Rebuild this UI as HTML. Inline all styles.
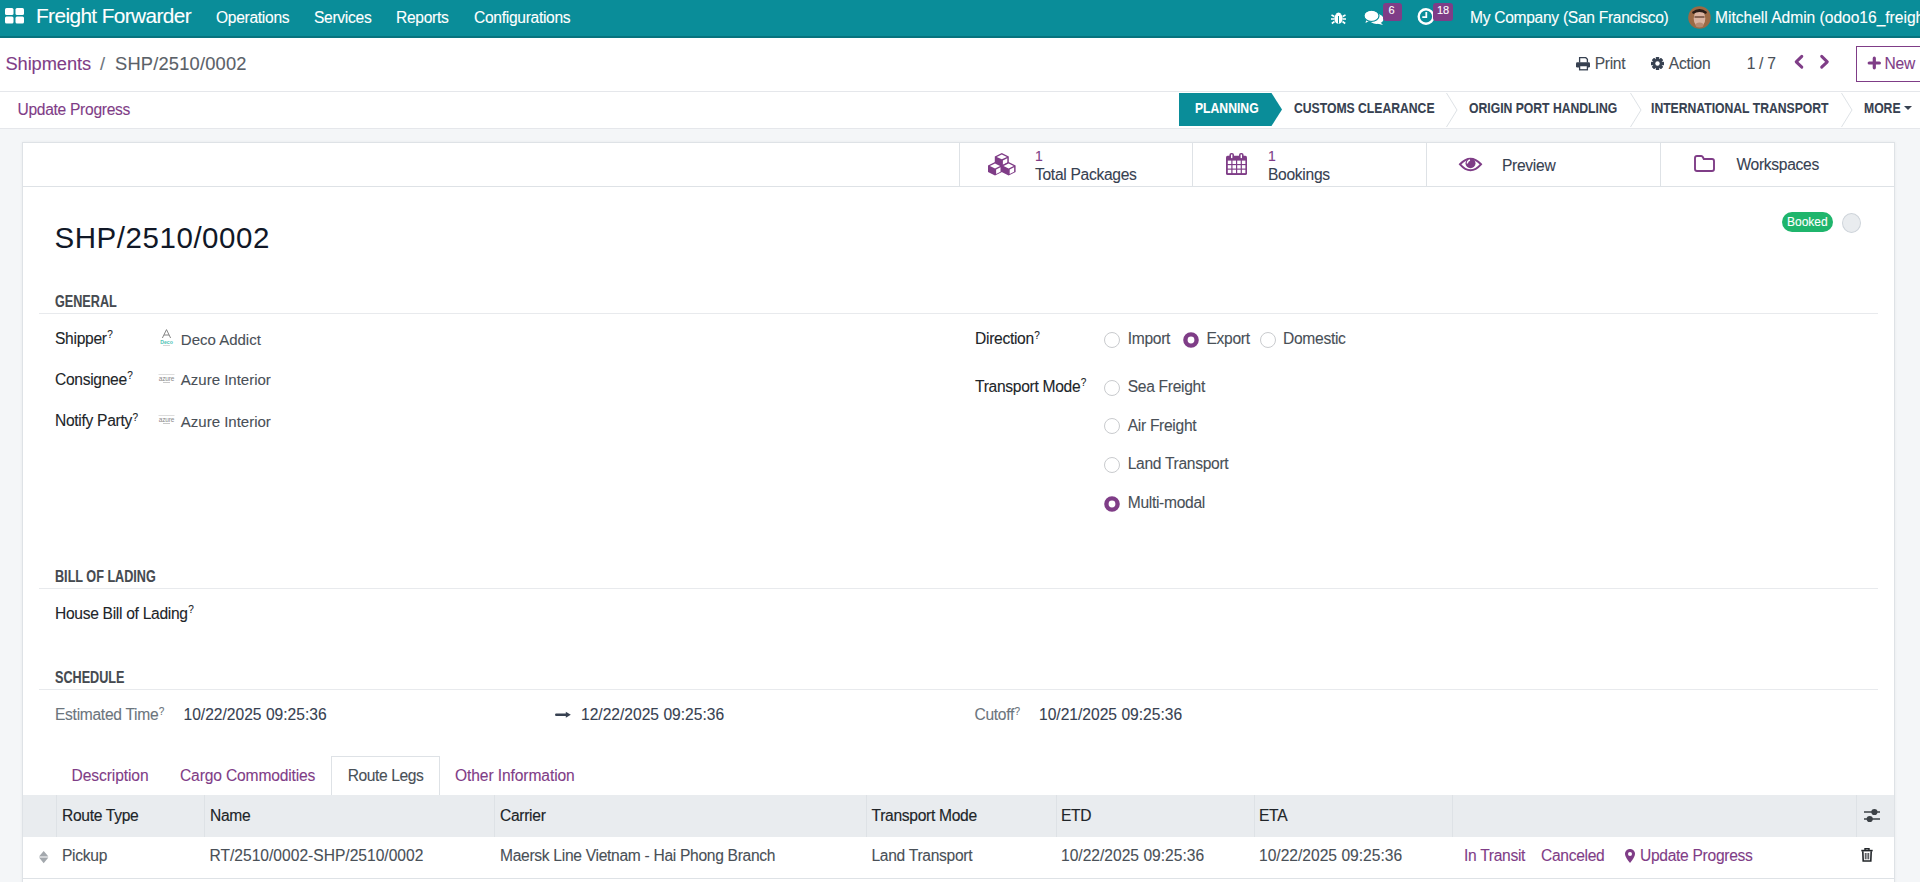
<!DOCTYPE html>
<html><head><meta charset="utf-8"><style>
html,body{margin:0;padding:0;width:1920px;height:882px;overflow:hidden;position:relative;font-family:"Liberation Sans", sans-serif;}
.t{position:absolute;white-space:nowrap;line-height:1;-webkit-text-stroke:0.1px currentColor;}
</style></head><body>
<div style="position:absolute;left:0px;top:0px;width:1920px;height:882px;background:#f4f6f8"></div>
<div style="position:absolute;left:0px;top:0px;width:1920px;height:36px;background:#0a8d99"></div>
<div style="position:absolute;left:0px;top:36px;width:1920px;height:1.6px;background:#07737e"></div>
<svg style="position:absolute;left:5px;top:8px;overflow:visible" width="19" height="16" viewBox="0 0 19 16"><g fill="#fff"><rect x="0" y="0" width="8.5" height="7" rx="1.5"/><rect x="10.5" y="0" width="8.5" height="7" rx="1.5"/><rect x="0" y="8.5" width="8.5" height="7" rx="1.5"/><rect x="10.5" y="8.5" width="8.5" height="7" rx="1.5"/></g></svg>
<div class="t" style="left:36px;top:5.89px;font-size:20.8px;color:#fff;font-weight:400;letter-spacing:-0.6px;">Freight Forwarder</div>
<div class="t" style="left:216px;top:10.09px;font-size:15.6px;color:#fff;font-weight:400;letter-spacing:-0.3px;">Operations</div>
<div class="t" style="left:314px;top:10.09px;font-size:15.6px;color:#fff;font-weight:400;letter-spacing:-0.3px;">Services</div>
<div class="t" style="left:396px;top:10.09px;font-size:15.6px;color:#fff;font-weight:400;letter-spacing:-0.3px;">Reports</div>
<div class="t" style="left:474px;top:10.09px;font-size:15.6px;color:#fff;font-weight:400;letter-spacing:-0.3px;">Configurations</div>
<svg style="position:absolute;left:1331px;top:11px;overflow:visible" width="15" height="13" viewBox="0 0 15 13"><g fill="#fff"><ellipse cx="7.5" cy="7.5" rx="4.2" ry="5.2"/><path d="M4.5 3.2 Q7.5 0 10.5 3.2Z"/><path d="M3.3 5.5 L0.5 4 M3.2 8 L0 8 M3.5 10.5 L0.8 12.5 M11.7 5.5 L14.5 4 M11.8 8 L15 8 M11.5 10.5 L14.2 12.5" stroke="#fff" stroke-width="1.6"/></g><path d="M7.5 5 V12.5" stroke="#0a8d99" stroke-width="1"/></svg>
<svg style="position:absolute;left:1364px;top:10px;overflow:visible" width="20" height="15" viewBox="0 0 20 15"><g fill="#fff"><ellipse cx="7.5" cy="5.8" rx="7.5" ry="5.6"/><path d="M2.5 9 L1.5 13 L6 10.5Z"/><ellipse cx="12.5" cy="9" rx="7" ry="5" /><path d="M16 12 L19 15 L13 13.5Z"/></g><ellipse cx="7.5" cy="5.8" rx="7.5" ry="5.6" fill="none" stroke="#0a8d99" stroke-width="1.2"/><ellipse cx="7.5" cy="5.8" rx="6.3" ry="4.6" fill="#fff"/></svg>
<div style="position:absolute;left:1382.5px;top:2.5px;width:19px;height:18px;background:#7f3d87;border-radius:3px"></div>
<div class="t" style="left:1388.5px;top:4.89px;font-size:11px;color:#fff;font-weight:400;">6</div>
<svg style="position:absolute;left:1417px;top:7px;overflow:visible" width="18" height="18" viewBox="0 0 18 18"><circle cx="9" cy="9.5" r="7.3" fill="none" stroke="#fff" stroke-width="2.4"/><path d="M9.3 5 V10.2 H5.3" fill="none" stroke="#fff" stroke-width="1.8"/></svg>
<div style="position:absolute;left:1432.5px;top:2.5px;width:20.5px;height:18px;background:#7f3d87;border-radius:3px"></div>
<div class="t" style="left:1437px;top:4.89px;font-size:11px;color:#fff;font-weight:400;">18</div>
<div class="t" style="left:1470px;top:10.09px;font-size:15.6px;color:#fff;font-weight:400;letter-spacing:-0.3px;">My Company (San Francisco)</div>
<svg style="position:absolute;left:1688px;top:6px;overflow:visible" width="23" height="23" viewBox="0 0 23 23"><defs><clipPath id="av"><circle cx="11.5" cy="11.5" r="11.3"/></clipPath></defs><g clip-path="url(#av)"><rect width="23" height="23" fill="#9b6a45"/><ellipse cx="11.5" cy="12.5" rx="5.8" ry="8" fill="#d9b3a0"/><path d="M4 6 Q11.5 0 19 6 L18 8 Q11.5 4 5 8Z" fill="#2a1c16"/><path d="M6.5 11 H16.5" stroke="#6b4a3a" stroke-width="1.3"/><ellipse cx="11.5" cy="19" rx="4" ry="2.5" fill="#b88a70"/></g></svg>
<div class="t" style="left:1715px;top:10.09px;font-size:15.6px;color:#fff;font-weight:400;letter-spacing:-0.02px;">Mitchell Admin (odoo16_freight_forwarder)</div>
<div style="position:absolute;left:0px;top:37.6px;width:1920px;height:54px;background:#fff"></div>
<div style="position:absolute;left:0px;top:91px;width:1920px;height:1px;background:#e5e7eb"></div>
<div class="t" style="left:5.5px;top:54.51px;font-size:18.3px;color:#7f3d87;font-weight:400;letter-spacing:-0.1px;">Shipments</div>
<div class="t" style="left:100px;top:54.51px;font-size:18.3px;color:#6c757d;font-weight:400;">/</div>
<div class="t" style="left:115px;top:54.51px;font-size:18.3px;color:#5a6168;font-weight:400;letter-spacing:0.2px;">SHP/2510/0002</div>
<svg style="position:absolute;left:1576px;top:57px;overflow:visible" width="14" height="13.5" viewBox="0 0 14 13.5"><path d="M3.6 5.5 V0.7 H9.8 L11.4 2.3 V5.5" fill="none" stroke="#374151" stroke-width="1.3"/><rect x="0" y="5.3" width="14" height="5.2" rx="1.3" fill="#374151"/><rect x="3.6" y="8.6" width="7.8" height="4.2" fill="#fff" stroke="#374151" stroke-width="1.3"/></svg>
<div class="t" style="left:1594.7px;top:56.49px;font-size:15.6px;color:#495057;font-weight:400;letter-spacing:-0.3px;">Print</div>
<svg style="position:absolute;left:1651px;top:57px;overflow:visible" width="13" height="13" viewBox="0 0 13 13"><g transform="translate(6.5,6.5)" fill="#374151"><rect x="-1.7" y="-6.5" width="3.4" height="3.2" rx="0.5" transform="rotate(0)"/><rect x="-1.7" y="-6.5" width="3.4" height="3.2" rx="0.5" transform="rotate(45)"/><rect x="-1.7" y="-6.5" width="3.4" height="3.2" rx="0.5" transform="rotate(90)"/><rect x="-1.7" y="-6.5" width="3.4" height="3.2" rx="0.5" transform="rotate(135)"/><rect x="-1.7" y="-6.5" width="3.4" height="3.2" rx="0.5" transform="rotate(180)"/><rect x="-1.7" y="-6.5" width="3.4" height="3.2" rx="0.5" transform="rotate(225)"/><rect x="-1.7" y="-6.5" width="3.4" height="3.2" rx="0.5" transform="rotate(270)"/><rect x="-1.7" y="-6.5" width="3.4" height="3.2" rx="0.5" transform="rotate(315)"/><circle r="4.5"/></g><circle cx="6.5" cy="6.5" r="2.2" fill="#fff"/></svg>
<div class="t" style="left:1668.8px;top:56.49px;font-size:15.6px;color:#495057;font-weight:400;letter-spacing:-0.3px;">Action</div>
<div class="t" style="left:1746.7px;top:56.49px;font-size:15.6px;color:#495057;font-weight:400;letter-spacing:-0.3px;">1 / 7</div>
<svg style="position:absolute;left:1794px;top:55.2px;overflow:visible" width="9.5" height="13.6" viewBox="0 0 9.5 13.6"><path d="M7.8 1.4 L2.2 6.8 L7.8 12.2" fill="none" stroke="#7f3d87" stroke-width="3" stroke-linecap="round" stroke-linejoin="round"/></svg>
<svg style="position:absolute;left:1820.3px;top:55.2px;overflow:visible" width="9.5" height="13.6" viewBox="0 0 9.5 13.6"><path d="M1.7 1.4 L7.3 6.8 L1.7 12.2" fill="none" stroke="#7f3d87" stroke-width="3" stroke-linecap="round" stroke-linejoin="round"/></svg>
<div style="position:absolute;left:1856px;top:46px;width:80px;height:36px;border:1px solid #7f3d87;box-sizing:border-box;background:#fff"></div>
<svg style="position:absolute;left:1868px;top:57.1px;overflow:visible" width="12.6" height="12" viewBox="0 0 12.6 12"><path d="M6.3 1.2 V10.8 M1.2 6 H11.4" stroke="#7f3d87" stroke-width="3.2" stroke-linecap="round"/></svg>
<div class="t" style="left:1884.6px;top:56.49px;font-size:15.6px;color:#7f3d87;font-weight:400;letter-spacing:-0.3px;">New</div>
<div style="position:absolute;left:0px;top:92px;width:1920px;height:37px;background:#fff"></div>
<div style="position:absolute;left:0px;top:128px;width:1920px;height:1px;background:#e5e7eb"></div>
<div class="t" style="left:17.5px;top:101.79px;font-size:15.6px;color:#7f3d87;font-weight:400;letter-spacing:-0.3px;">Update Progress</div>
<svg style="position:absolute;left:1179px;top:93px;overflow:visible" width="104" height="33" viewBox="0 0 104 33"><path d="M0 0 H92.5 L103 16.5 L92.5 33 H0Z" fill="#0a8d99"/></svg>
<div class="t" style="left:1195px;top:101.45px;font-size:14px;color:#fff;font-weight:700;"><span style="display:inline-block;transform:scaleX(0.87);transform-origin:0 0">PLANNING</span></div>
<div class="t" style="left:1294px;top:101.45px;font-size:14px;color:#374151;font-weight:700;"><span style="display:inline-block;transform:scaleX(0.87);transform-origin:0 0">CUSTOMS CLEARANCE</span></div>
<div class="t" style="left:1468.5px;top:101.45px;font-size:14px;color:#374151;font-weight:700;"><span style="display:inline-block;transform:scaleX(0.87);transform-origin:0 0">ORIGIN PORT HANDLING</span></div>
<div class="t" style="left:1651px;top:101.45px;font-size:14px;color:#374151;font-weight:700;"><span style="display:inline-block;transform:scaleX(0.87);transform-origin:0 0">INTERNATIONAL TRANSPORT</span></div>
<div class="t" style="left:1864px;top:101.45px;font-size:14px;color:#374151;font-weight:700;"><span style="display:inline-block;transform:scaleX(0.87);transform-origin:0 0">MORE</span></div>
<svg style="position:absolute;left:1904px;top:106px;overflow:visible" width="8" height="4" viewBox="0 0 8 4"><path d="M0 0 H8 L4 4Z" fill="#374151"/></svg>
<svg style="position:absolute;left:1445.5px;top:93px;overflow:visible" width="12" height="34" viewBox="0 0 12 34"><path d="M0.5 0 L11 17 L0.5 34" fill="none" stroke="#dee2e6" stroke-width="1"/></svg>
<svg style="position:absolute;left:1629.5px;top:93px;overflow:visible" width="12" height="34" viewBox="0 0 12 34"><path d="M0.5 0 L11 17 L0.5 34" fill="none" stroke="#dee2e6" stroke-width="1"/></svg>
<svg style="position:absolute;left:1841px;top:93px;overflow:visible" width="12" height="34" viewBox="0 0 12 34"><path d="M0.5 0 L11 17 L0.5 34" fill="none" stroke="#dee2e6" stroke-width="1"/></svg>
<div style="position:absolute;left:21.5px;top:142px;width:1873.5px;height:760px;background:#fff;border:1px solid #dee2e6;box-sizing:border-box;box-shadow:0 0 3px rgba(0,0,0,.06)"></div>
<div style="position:absolute;left:22px;top:186px;width:1873px;height:1px;background:#dee2e6"></div>
<div style="position:absolute;left:959px;top:142px;width:1px;height:45px;background:#dee2e6"></div>
<div style="position:absolute;left:1192px;top:142px;width:1px;height:45px;background:#dee2e6"></div>
<div style="position:absolute;left:1426px;top:142px;width:1px;height:45px;background:#dee2e6"></div>
<div style="position:absolute;left:1660px;top:142px;width:1px;height:45px;background:#dee2e6"></div>
<svg style="position:absolute;left:987.6px;top:152.7px;overflow:visible" width="28" height="23" viewBox="0 0 28 23"><path d="M13.8 0 L20.8 3.4 V10 L13.8 13.4 L6.8 10 V3.4Z" fill="#7f3d87"/><path d="M13.8 1.5 L18.9 3.9 L13.8 6.3 L8.7 3.9Z" fill="#fff"/><path d="M14.899999999999999 7.4 L19.3 5.2 V9.6 L14.899999999999999 11.8Z" fill="#fff"/><path d="M7 9.1 L14 12.5 V19.1 L7 22.5 L0 19.1 V12.5Z" fill="#7f3d87"/><path d="M7 10.6 L12.1 13.0 L7 15.399999999999999 L1.9 13.0Z" fill="#fff"/><path d="M8.1 16.5 L12.5 14.3 V18.7 L8.1 20.9Z" fill="#fff"/><path d="M20.6 9.1 L27.6 12.5 V19.1 L20.6 22.5 L13.6 19.1 V12.5Z" fill="#7f3d87"/><path d="M20.6 10.6 L25.7 13.0 L20.6 15.399999999999999 L15.5 13.0Z" fill="#fff"/><path d="M21.7 16.5 L26.1 14.3 V18.7 L21.7 20.9Z" fill="#fff"/></svg>
<div class="t" style="left:1035px;top:149.15px;font-size:14px;color:#7f3d87;font-weight:400;">1</div>
<div class="t" style="left:1035px;top:167.29px;font-size:15.6px;color:#374151;font-weight:400;letter-spacing:-0.3px;">Total Packages</div>
<svg style="position:absolute;left:1226px;top:153px;overflow:visible" width="21" height="22" viewBox="0 0 21 22"><rect x="0" y="2.8" width="21" height="19.2" rx="1.6" fill="#7f3d87"/><rect x="1.8" y="7.60" width="3.5" height="3.4" fill="#fff"/><rect x="1.8" y="12.15" width="3.5" height="3.4" fill="#fff"/><rect x="1.8" y="16.70" width="3.5" height="3.4" fill="#fff"/><rect x="6.5" y="7.60" width="3.5" height="3.4" fill="#fff"/><rect x="6.5" y="12.15" width="3.5" height="3.4" fill="#fff"/><rect x="6.5" y="16.70" width="3.5" height="3.4" fill="#fff"/><rect x="11.2" y="7.60" width="3.5" height="3.4" fill="#fff"/><rect x="11.2" y="12.15" width="3.5" height="3.4" fill="#fff"/><rect x="11.2" y="16.70" width="3.5" height="3.4" fill="#fff"/><rect x="15.9" y="7.60" width="3.5" height="3.4" fill="#fff"/><rect x="15.9" y="12.15" width="3.5" height="3.4" fill="#fff"/><rect x="15.9" y="16.70" width="3.5" height="3.4" fill="#fff"/><rect x="3.4" y="0" width="4.6" height="6" rx="2" fill="#7f3d87"/><rect x="13" y="0" width="4.6" height="6" rx="2" fill="#7f3d87"/><rect x="5" y="1.5" width="1.4" height="3.6" fill="#fff"/><rect x="14.6" y="1.5" width="1.4" height="3.6" fill="#fff"/></svg>
<div class="t" style="left:1268px;top:149.15px;font-size:14px;color:#7f3d87;font-weight:400;">1</div>
<div class="t" style="left:1268px;top:167.29px;font-size:15.6px;color:#374151;font-weight:400;letter-spacing:-0.3px;">Bookings</div>
<svg style="position:absolute;left:1459px;top:157.3px;overflow:visible" width="23" height="15" viewBox="0 0 23 15"><path d="M1 7.3 Q11.5 -4 22 7.3 Q11.5 19 1 7.3Z" fill="none" stroke="#7f3d87" stroke-width="2"/><circle cx="11.5" cy="6.2" r="5" fill="#7f3d87"/><path d="M8.3 6.5 Q8.5 3.6 11 3" fill="none" stroke="#fff" stroke-width="1.3"/></svg>
<div class="t" style="left:1502px;top:157.59px;font-size:15.6px;color:#374151;font-weight:400;letter-spacing:-0.3px;">Preview</div>
<svg style="position:absolute;left:1694px;top:154.7px;overflow:visible" width="21" height="17" viewBox="0 0 21 17"><path d="M1 3 Q1 1 3 1 H7.3 Q8.3 1 8.8 2 L9.8 4 H18 Q20 4 20 6 V14 Q20 16 18 16 H3 Q1 16 1 14Z" fill="none" stroke="#7f3d87" stroke-width="1.9"/></svg>
<div class="t" style="left:1736.4px;top:157.19px;font-size:15.6px;color:#374151;font-weight:400;letter-spacing:-0.3px;">Workspaces</div>
<div style="position:absolute;left:1782px;top:212px;width:50.5px;height:20px;background:#1fb56c;border-radius:10px"></div>
<div class="t" style="left:1787px;top:216.14px;font-size:12px;color:#fff;font-weight:400;">Booked</div>
<div style="position:absolute;left:1842px;top:213px;width:19px;height:20px;background:#e9ecef;border:1px solid #ced4da;border-radius:50%;box-sizing:border-box"></div>
<div class="t" style="left:54.5px;top:223.03px;font-size:29.5px;color:#111827;font-weight:400;letter-spacing:0.55px;-webkit-text-stroke:0">SHP/2510/0002</div>
<div class="t" style="left:55.3px;top:294.39px;font-size:15.6px;color:#454a50;font-weight:700;"><span style="display:inline-block;transform:scaleX(0.81);transform-origin:0 0">GENERAL</span></div>
<div style="position:absolute;left:39px;top:312.5px;width:1839px;height:1px;background:#e8eaed"></div>
<div class="t" style="left:55.3px;top:569.19px;font-size:15.6px;color:#454a50;font-weight:700;"><span style="display:inline-block;transform:scaleX(0.81);transform-origin:0 0">BILL OF LADING</span></div>
<div style="position:absolute;left:39px;top:587.5px;width:1839px;height:1px;background:#e8eaed"></div>
<div class="t" style="left:55.3px;top:670.19px;font-size:15.6px;color:#454a50;font-weight:700;"><span style="display:inline-block;transform:scaleX(0.81);transform-origin:0 0">SCHEDULE</span></div>
<div style="position:absolute;left:39px;top:688.5px;width:1839px;height:1px;background:#e8eaed"></div>
<div class="t" style="left:55px;top:330.99px;font-size:15.6px;color:#212529;font-weight:400;letter-spacing:-0.3px;">Shipper<span style="font-size:10px;position:relative;top:-5.6px;letter-spacing:0;margin-left:0.5px">?</span></div>
<div class="t" style="left:180.8px;top:331.50px;font-size:15px;color:#495057;font-weight:400;">Deco Addict</div>
<div class="t" style="left:55px;top:371.59px;font-size:15.6px;color:#212529;font-weight:400;letter-spacing:-0.3px;">Consignee<span style="font-size:10px;position:relative;top:-5.6px;letter-spacing:0;margin-left:0.5px">?</span></div>
<div class="t" style="left:180.8px;top:372.10px;font-size:15px;color:#495057;font-weight:400;">Azure Interior</div>
<div class="t" style="left:55px;top:413.39px;font-size:15.6px;color:#212529;font-weight:400;letter-spacing:-0.3px;">Notify Party<span style="font-size:10px;position:relative;top:-5.6px;letter-spacing:0;margin-left:0.5px">?</span></div>
<div class="t" style="left:180.8px;top:413.90px;font-size:15px;color:#495057;font-weight:400;">Azure Interior</div>
<svg style="position:absolute;left:158px;top:328.5px;overflow:visible" width="17" height="18" viewBox="0 0 17 18"><path d="M4.4 9 L8.5 0.6 L12.6 9 M6 6 H11" stroke="#777" stroke-width="0.9" fill="none"/><text x="8.5" y="14.6" font-size="5.2" font-family="Liberation Sans" fill="#4fc3b5" text-anchor="middle" font-weight="700">Deco</text><rect x="5" y="16" width="7" height="0.8" fill="#ccc"/></svg>
<svg style="position:absolute;left:158px;top:373.5px;overflow:visible" width="17" height="10" viewBox="0 0 17 10"><rect x="0.5" y="0" width="16" height="0.8" fill="#d5d5d5"/><text x="8.5" y="6.8" font-size="6.5" font-family="Liberation Sans" fill="#888" text-anchor="middle" letter-spacing="-0.2">azure</text><rect x="5" y="8" width="7" height="0.8" fill="#bbb"/></svg>
<svg style="position:absolute;left:158px;top:415px;overflow:visible" width="17" height="10" viewBox="0 0 17 10"><rect x="0.5" y="0" width="16" height="0.8" fill="#d5d5d5"/><text x="8.5" y="6.8" font-size="6.5" font-family="Liberation Sans" fill="#888" text-anchor="middle" letter-spacing="-0.2">azure</text><rect x="5" y="8" width="7" height="0.8" fill="#bbb"/></svg>
<div class="t" style="left:975px;top:331.39px;font-size:15.6px;color:#212529;font-weight:400;letter-spacing:-0.3px;">Direction<span style="font-size:10px;position:relative;top:-5.6px;letter-spacing:0;margin-left:0.5px">?</span></div>
<svg style="position:absolute;left:1104px;top:331.5px;overflow:visible" width="16" height="16" viewBox="0 0 16 16"><circle cx="8" cy="8" r="7.5" fill="#fff" stroke="#c9cbce" stroke-width="1"/></svg>
<div class="t" style="left:1127.7px;top:331.39px;font-size:15.6px;color:#495057;font-weight:400;letter-spacing:-0.3px;">Import</div>
<svg style="position:absolute;left:1182.5px;top:331.5px;overflow:visible" width="16" height="16" viewBox="0 0 16 16"><circle cx="8" cy="8" r="5.6" fill="#fff" stroke="#7f3d87" stroke-width="4.4"/></svg>
<div class="t" style="left:1206.5px;top:331.39px;font-size:15.6px;color:#495057;font-weight:400;letter-spacing:-0.3px;">Export</div>
<svg style="position:absolute;left:1260px;top:331.5px;overflow:visible" width="16" height="16" viewBox="0 0 16 16"><circle cx="8" cy="8" r="7.5" fill="#fff" stroke="#c9cbce" stroke-width="1"/></svg>
<div class="t" style="left:1283px;top:331.39px;font-size:15.6px;color:#495057;font-weight:400;letter-spacing:-0.3px;">Domestic</div>
<div class="t" style="left:975px;top:378.69px;font-size:15.6px;color:#212529;font-weight:400;letter-spacing:-0.3px;">Transport Mode<span style="font-size:10px;position:relative;top:-5.6px;letter-spacing:0;margin-left:0.5px">?</span></div>
<svg style="position:absolute;left:1104px;top:379.5px;overflow:visible" width="16" height="16" viewBox="0 0 16 16"><circle cx="8" cy="8" r="7.5" fill="#fff" stroke="#c9cbce" stroke-width="1"/></svg>
<div class="t" style="left:1127.7px;top:379.39px;font-size:15.6px;color:#495057;font-weight:400;letter-spacing:-0.3px;">Sea Freight</div>
<svg style="position:absolute;left:1104px;top:418px;overflow:visible" width="16" height="16" viewBox="0 0 16 16"><circle cx="8" cy="8" r="7.5" fill="#fff" stroke="#c9cbce" stroke-width="1"/></svg>
<div class="t" style="left:1127.7px;top:417.89px;font-size:15.6px;color:#495057;font-weight:400;letter-spacing:-0.3px;">Air Freight</div>
<svg style="position:absolute;left:1104px;top:456.5px;overflow:visible" width="16" height="16" viewBox="0 0 16 16"><circle cx="8" cy="8" r="7.5" fill="#fff" stroke="#c9cbce" stroke-width="1"/></svg>
<div class="t" style="left:1127.7px;top:456.39px;font-size:15.6px;color:#495057;font-weight:400;letter-spacing:-0.3px;">Land Transport</div>
<svg style="position:absolute;left:1104px;top:495.5px;overflow:visible" width="16" height="16" viewBox="0 0 16 16"><circle cx="8" cy="8" r="5.6" fill="#fff" stroke="#7f3d87" stroke-width="4.4"/></svg>
<div class="t" style="left:1127.7px;top:495.39px;font-size:15.6px;color:#495057;font-weight:400;letter-spacing:-0.3px;">Multi-modal</div>
<div class="t" style="left:55px;top:606.09px;font-size:15.6px;color:#212529;font-weight:400;letter-spacing:-0.3px;">House Bill of Lading<span style="font-size:10px;position:relative;top:-5.6px;letter-spacing:0;margin-left:0.5px">?</span></div>
<div class="t" style="left:55px;top:707.29px;font-size:15.6px;color:#6c757d;font-weight:400;letter-spacing:-0.3px;">Estimated Time<span style="font-size:10px;position:relative;top:-5.6px;letter-spacing:0;margin-left:0.5px">?</span></div>
<div class="t" style="left:183.5px;top:707.29px;font-size:15.6px;color:#374151;font-weight:400;">10/22/2025 09:25:36</div>
<svg style="position:absolute;left:554.5px;top:710.8px;overflow:visible" width="16" height="8" viewBox="0 0 16 8"><path d="M1.2 3.8 H12" stroke="#374151" stroke-width="2.4" stroke-linecap="round"/><path d="M10.8 0.8 L15.8 3.8 L10.8 6.8Z" fill="#374151"/></svg>
<div class="t" style="left:581px;top:707.29px;font-size:15.6px;color:#374151;font-weight:400;">12/22/2025 09:25:36</div>
<div class="t" style="left:974.5px;top:707.29px;font-size:15.6px;color:#6c757d;font-weight:400;letter-spacing:-0.3px;">Cutoff<span style="font-size:10px;position:relative;top:-5.6px;letter-spacing:0;margin-left:0.5px">?</span></div>
<div class="t" style="left:1039px;top:707.29px;font-size:15.6px;color:#374151;font-weight:400;">10/21/2025 09:25:36</div>
<div class="t" style="left:71.6px;top:767.59px;font-size:15.6px;color:#7f3d87;font-weight:400;letter-spacing:-0.1px;">Description</div>
<div class="t" style="left:180px;top:767.59px;font-size:15.6px;color:#7f3d87;font-weight:400;letter-spacing:-0.15px;">Cargo Commodities</div>
<div style="position:absolute;left:331px;top:756px;width:109px;height:40px;background:#fff;border:1px solid #dee2e6;border-bottom:none;box-sizing:border-box"></div>
<div class="t" style="left:347.7px;top:767.59px;font-size:15.6px;color:#495057;font-weight:400;letter-spacing:-0.4px;">Route Legs</div>
<div class="t" style="left:455px;top:767.59px;font-size:15.6px;color:#7f3d87;font-weight:400;letter-spacing:-0.1px;">Other Information</div>
<div style="position:absolute;left:23px;top:795px;width:1871px;height:42px;background:#e9ecef"></div>
<div style="position:absolute;left:56px;top:795px;width:1px;height:42px;background:#dee2e6"></div>
<div style="position:absolute;left:204px;top:795px;width:1px;height:42px;background:#dee2e6"></div>
<div style="position:absolute;left:494px;top:795px;width:1px;height:42px;background:#dee2e6"></div>
<div style="position:absolute;left:866px;top:795px;width:1px;height:42px;background:#dee2e6"></div>
<div style="position:absolute;left:1056px;top:795px;width:1px;height:42px;background:#dee2e6"></div>
<div style="position:absolute;left:1254px;top:795px;width:1px;height:42px;background:#dee2e6"></div>
<div style="position:absolute;left:1452px;top:795px;width:1px;height:42px;background:#dee2e6"></div>
<div style="position:absolute;left:1856px;top:795px;width:1px;height:42px;background:#dee2e6"></div>
<div class="t" style="left:62px;top:807.59px;font-size:15.6px;color:#212529;font-weight:400;letter-spacing:-0.3px;-webkit-text-stroke:0.15px #212529">Route Type</div>
<div class="t" style="left:210px;top:807.59px;font-size:15.6px;color:#212529;font-weight:400;letter-spacing:-0.3px;-webkit-text-stroke:0.15px #212529">Name</div>
<div class="t" style="left:500px;top:807.59px;font-size:15.6px;color:#212529;font-weight:400;letter-spacing:-0.3px;-webkit-text-stroke:0.15px #212529">Carrier</div>
<div class="t" style="left:871.5px;top:807.59px;font-size:15.6px;color:#212529;font-weight:400;letter-spacing:-0.3px;-webkit-text-stroke:0.15px #212529">Transport Mode</div>
<div class="t" style="left:1061px;top:807.59px;font-size:15.6px;color:#212529;font-weight:400;letter-spacing:-0.3px;-webkit-text-stroke:0.15px #212529">ETD</div>
<div class="t" style="left:1259px;top:807.59px;font-size:15.6px;color:#212529;font-weight:400;letter-spacing:-0.3px;-webkit-text-stroke:0.15px #212529">ETA</div>
<svg style="position:absolute;left:1864px;top:808px;overflow:visible" width="16" height="14" viewBox="0 0 16 14"><path d="M0 4 H16 M0 11 H16" stroke="#3d4247" stroke-width="1.3"/><circle cx="10.4" cy="4" r="3.1" fill="#3d4247"/><circle cx="5.7" cy="11" r="3.1" fill="#3d4247"/></svg>
<div style="position:absolute;left:23px;top:878px;width:1871px;height:1px;background:#dee2e6"></div>
<svg style="position:absolute;left:38.8px;top:851px;overflow:visible" width="9.4" height="12.2" viewBox="0 0 9.4 12.2"><path d="M4.7 0 L9.4 5.4 H0Z M4.7 12.2 L9.4 6.6 H0Z" fill="#a3a8ad"/></svg>
<div class="t" style="left:62px;top:847.79px;font-size:15.6px;color:#495057;font-weight:400;letter-spacing:-0.3px;">Pickup</div>
<div class="t" style="left:209.5px;top:847.79px;font-size:15.6px;color:#495057;font-weight:400;">RT/2510/0002-SHP/2510/0002</div>
<div class="t" style="left:500px;top:847.79px;font-size:15.6px;color:#495057;font-weight:400;letter-spacing:-0.3px;">Maersk Line Vietnam - Hai Phong Branch</div>
<div class="t" style="left:871.5px;top:847.79px;font-size:15.6px;color:#495057;font-weight:400;letter-spacing:-0.3px;">Land Transport</div>
<div class="t" style="left:1061px;top:847.79px;font-size:15.6px;color:#495057;font-weight:400;">10/22/2025 09:25:36</div>
<div class="t" style="left:1259px;top:847.79px;font-size:15.6px;color:#495057;font-weight:400;">10/22/2025 09:25:36</div>
<div class="t" style="left:1464px;top:847.79px;font-size:15.6px;color:#7f3d87;font-weight:400;letter-spacing:-0.3px;">In Transit</div>
<div class="t" style="left:1541px;top:847.79px;font-size:15.6px;color:#7f3d87;font-weight:400;letter-spacing:-0.3px;">Canceled</div>
<svg style="position:absolute;left:1625px;top:849px;overflow:visible" width="10" height="14" viewBox="0 0 10 14"><path d="M5 0 C2 0 0 2.2 0 5 C0 8 5 14 5 14 C5 14 10 8 10 5 C10 2.2 8 0 5 0Z" fill="#7f3d87"/><circle cx="5" cy="5" r="2" fill="#fff"/></svg>
<div class="t" style="left:1640px;top:847.79px;font-size:15.6px;color:#7f3d87;font-weight:400;letter-spacing:-0.3px;">Update Progress</div>
<svg style="position:absolute;left:1861px;top:848px;overflow:visible" width="12" height="14" viewBox="0 0 12 14"><path d="M0.3 2.6 H11.7" stroke="#212529" stroke-width="1.6"/><path d="M4 2.6 V0.8 H8 V2.6" fill="none" stroke="#212529" stroke-width="1.4"/><path d="M1.8 3.2 L2.2 13 H9.8 L10.2 3.2" fill="none" stroke="#212529" stroke-width="1.6"/><path d="M4.3 5 V11.3 M6 5 V11.3 M7.7 5 V11.3" stroke="#212529" stroke-width="0.9"/></svg>
</body></html>
